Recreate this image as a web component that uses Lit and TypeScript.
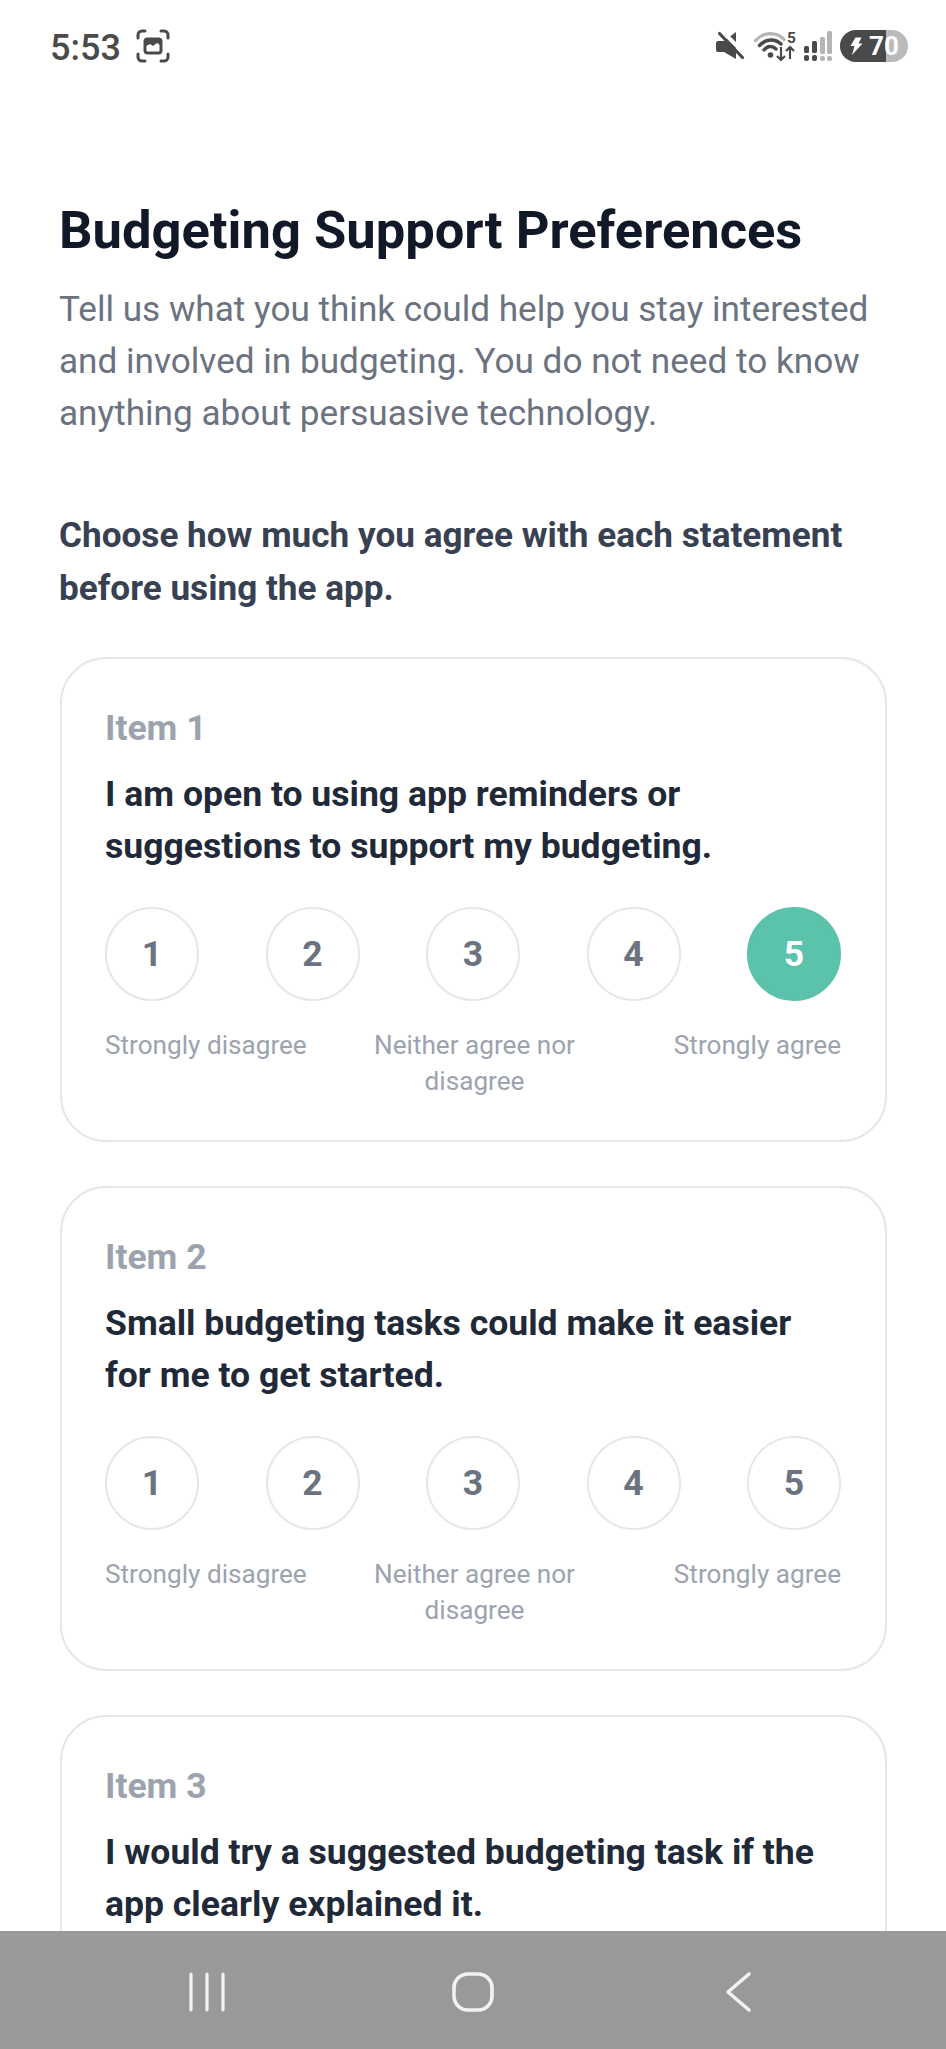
import { LitElement, html, css } from "lit";
import { customElement } from "lit/decorators.js";

const ITEMS = [
  { n: 1, q: "I am open to using app reminders or suggestions to support my budgeting.", sel: 5, full: true },
  { n: 2, q: "Small budgeting tasks could make it easier for me to get started.", sel: 0, full: true },
  { n: 3, q: "I would try a suggested budgeting task if the app clearly explained it.", sel: 0, full: false },
];

@customElement("app-root")
export class AppRoot extends LitElement {
  static styles = css`
    :host { display: block; width: 946px; height: 2049px; background: #fff; font-family: Roboto, "Liberation Sans", sans-serif; overflow: hidden; }
    .page { height: 2049px; display: flex; flex-direction: column; }
    .status { flex: none; height: 92px; display: flex; align-items: flex-start; justify-content: space-between; padding: 28px 38px 0 50px; box-sizing: border-box; color: #4a4a4a; }
    .left, .right { display: flex; align-items: center; height: 36px; }
    .left { gap: 15px; }
    .right { gap: 8px; }
    .right svg { display: block; overflow: visible; }
    .time { font-size: 36px; line-height: 36px; font-weight: 500; position: relative; top: 2px; }
    .content { flex: 1; min-height: 0; overflow: hidden; padding: 104px 59px 0 59px; }
    h1 { margin: 0; font-size: 52.5px; line-height: 68px; font-weight: 700; color: #111827; }
    .sub { margin: 18.5px 0 0; font-size: 35.15px; line-height: 52.3px; color: #6b7280; }
    .lead { margin: 70px 0 0; font-size: 35.15px; line-height: 52.3px; font-weight: 700; color: #374151; }
    .card { margin: 43px 0 0 1px; border: 2px solid #e5e7eb; border-radius: 46px; padding: 49px 44px 44px 43px; height: 485px; box-sizing: border-box; background: #fff; }
    .card + .card { margin-top: 44px; }
    .item { font-size: 35.55px; line-height: 40px; font-weight: 700; color: #9ca3af; }
    .q { margin-top: 20px; font-size: 35.55px; line-height: 52.3px; font-weight: 700; color: #1f2937; }
    .scale { margin-top: 34px; display: flex; justify-content: space-between; }
    .dot { width: 94px; height: 94px; box-sizing: border-box; border-radius: 50%; border: 2px solid #e5e7eb; display: flex; align-items: center; justify-content: center; font-size: 35.55px; font-weight: 700; color: #6b7280; }
    .dot.on { background: #5bc2ac; border-color: #5bc2ac; color: #fff; }
    .labels { margin-top: 27.5px; display: grid; grid-template-columns: 1fr 1fr 1fr; gap: 8px; font-size: 26.15px; line-height: 35.5px; color: #9ca3af; }
    .labels span:nth-child(2) { text-align: center; padding-left: 3px; }
    .labels span:nth-child(3) { text-align: right; }
    .nav { flex: none; height: 118px; background: #999; display: grid; grid-template-columns: 1fr 1fr 1fr; }
    .nav svg { display: block; }
    .navbtn { display: flex; align-items: center; padding-top: 4px; }
    .navbtn.a { padding-left: 187px; }
    .navbtn.b { padding-left: 137px; }
    .navbtn.c { padding-left: 93px; }
  `;

  shot() {
    return html`<svg width="34" height="34" viewBox="0 0 34 34" fill="none" stroke="#4a4a4a" stroke-width="3" stroke-linecap="round">
      <path d="M2 9V6a4 4 0 0 1 4-4h3M25 2h3a4 4 0 0 1 4 4v3M32 25v3a4 4 0 0 1-4 4h-3M9 32H6a4 4 0 0 1-4-4v-3" />
      <rect x="9" y="10" width="16" height="14" rx="2.5" fill="none" />
      <path d="M10 11h14v5l-3-2-4 3-3-2-4 2z" fill="#4a4a4a" stroke="none" />
    </svg>`;
  }

  mute() {
    return html`<svg width="30" height="28" viewBox="0 0 30 28">
      <path d="M2 9h6l12-9v27L8 20H2a2 2 0 0 1-2-2v-7a2 2 0 0 1 2-2z" fill="#4a4a4a" />
      <path d="M6 -1l24 24" stroke="#fff" stroke-width="4" />
      <path d="M3.5 1.5l23 24" stroke="#4a4a4a" stroke-width="3.2" stroke-linecap="round" />
    </svg>`;
  }

  wifi() {
    return html`<svg width="42" height="32" viewBox="0 0 42 32">
      <g fill="none" stroke-linecap="round">
        <path d="M1.5 10.5C9.5 1.5 22.5 1.5 30 9.5" stroke="#b5b5b5" stroke-width="3.2" />
        <path d="M5.5 15.5C12 8.5 21 8.5 27 14" stroke="#4a4a4a" stroke-width="3.4" />
        <path d="M10 20C13.5 15.5 18.5 15.5 22 19" stroke="#4a4a4a" stroke-width="3.4" />
      </g>
      <circle cx="16.5" cy="25" r="2.8" fill="#4a4a4a" />
      <text x="33" y="13" font-size="15.5" font-weight="700" fill="#4a4a4a" font-family="Roboto">5</text>
      <path d="M27 17v13M23 26l4 4 4-4M36 29V17M32 21l4-4 4 4" fill="none" stroke="#4a4a4a" stroke-width="2.2" />
    </svg>`;
  }

  signal() {
    return html`<svg width="28" height="30" viewBox="0 0 28 30">
      <g fill="#4a4a4a">
        <rect x="0" y="15" width="5" height="7" rx="1.5" /><rect x="0" y="24" width="5" height="6" rx="2" />
        <rect x="8" y="10" width="5" height="12" rx="1.5" /><rect x="8" y="24" width="5" height="6" rx="2" />
      </g>
      <g fill="#b5b5b5">
        <rect x="16" y="6" width="5" height="17" rx="1.5" /><rect x="16" y="25" width="5" height="5" rx="2" />
        <rect x="23" y="0" width="5" height="23" rx="1.5" /><rect x="23" y="25" width="5" height="5" rx="2" />
      </g>
    </svg>`;
  }

  battery() {
    return html`<svg width="68" height="32" viewBox="0 0 68 32">
      <rect width="68" height="32" rx="16" fill="#bababa" />
      <path d="M16 0h30v32H16A16 16 0 0 1 16 0z" fill="#4a4a4a" />
      <path d="M15.5 7.5h6l-3 6h4L12 25l2.5-9H10.5z" fill="#fff" />
      <text x="29" y="25" font-size="26" font-weight="700" fill="#fff" font-family="Roboto">70</text>
    </svg>`;
  }

  render() {
    return html`<div class="page">
      <div class="status">
        <div class="left"><span class="time">5:53</span>${this.shot()}</div>
        <div class="right">${this.mute()}${this.wifi()}${this.signal()}${this.battery()}</div>
      </div>
      <div class="content">
        <h1>Budgeting Support Preferences</h1>
        <p class="sub">Tell us what you think could help you stay interested and involved in budgeting. You do not need to know anything about persuasive technology.</p>
        <p class="lead">Choose how much you agree with each statement before using the app.</p>
        ${ITEMS.map(
          (it) => html`<div class="card">
            <div class="item">Item ${it.n}</div>
            <div class="q">${it.q}</div>
            ${it.full
              ? html`<div class="scale">
                    ${[1, 2, 3, 4, 5].map((v) => html`<div class="dot ${v === it.sel ? "on" : ""}">${v}</div>`)}
                  </div>
                  <div class="labels"><span>Strongly disagree</span><span>Neither agree nor disagree</span><span>Strongly agree</span></div>`
              : ""}
          </div>`
        )}
      </div>
      <div class="nav">
        <div class="navbtn a"><svg width="40" height="42" viewBox="0 0 40 42" fill="none" stroke="#f2f2f2" stroke-width="3.2" stroke-linecap="round"><path d="M4 3v36M20 3v36M36 3v36" /></svg></div>
        <div class="navbtn b"><svg width="42" height="42" viewBox="0 0 42 42" fill="none" stroke="#f2f2f2" stroke-width="3.6"><rect x="2" y="3" width="38" height="36" rx="14" /></svg></div>
        <div class="navbtn c"><svg width="28" height="42" viewBox="0 0 28 42" fill="none" stroke="#f2f2f2" stroke-width="3.6" stroke-linecap="round" stroke-linejoin="round"><path d="M25 3L4 21l21 18" /></svg></div>
      </div>
    </div>`;
  }
}
